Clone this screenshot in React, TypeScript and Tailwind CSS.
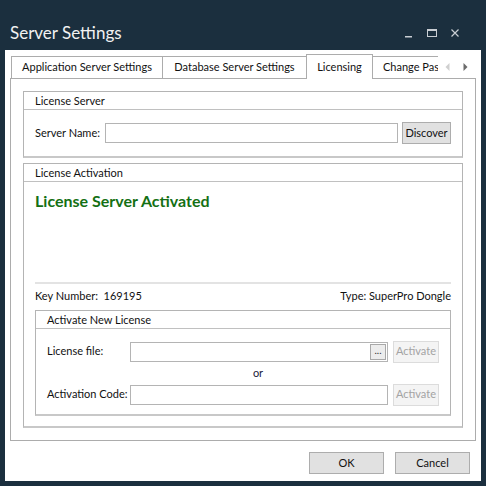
import React from "react";

const ui = { fontFamily: 'Lato, "Noto Sans", "Liberation Sans", sans-serif' };

function GroupBox({
  title,
  className,
  bodyClassName,
  children,
}: {
  title: string;
  className?: string;
  bodyClassName?: string;
  children: React.ReactNode;
}) {
  return (
    <div className={"flex flex-col border border-[#b4b4b4] border-b-2 border-b-[#c8c8c8] " + (className ?? "")}>
      <div className="h-[18px] shrink-0 flex items-center pl-[11px] pt-[2px] border-b border-[#c0c0c0] text-[11px] text-[#111] whitespace-nowrap">
        {title}
      </div>
      <div className={"flex-1 flex flex-col " + (bodyClassName ?? "")}>{children}</div>
    </div>
  );
}

function Tab({ label, selected, w }: { label: string; selected?: boolean; w: string }) {
  return (
    <div
      className={
        "shrink-0 flex items-center justify-center border border-b-0 border-[#acacac] bg-white text-[11px] text-[#111] whitespace-nowrap overflow-hidden " +
        w +
        (selected ? " h-[25px] -mb-px relative z-10" : " h-[22px] -ml-px first:ml-0")
      }
    >
      {label}
    </div>
  );
}

function WinButton({ label, disabled, w }: { label: string; disabled?: boolean; w: string }) {
  return (
    <div
      className={
        "h-[22px] flex items-center justify-center border text-[11px] whitespace-nowrap " +
        w +
        (disabled
          ? " border-[#dcdcdc] bg-[#f4f4f4] text-[#a3a3a3]"
          : " border-[#adadad] bg-[#e1e1e1] text-[#111]")
      }
    >
      {label}
    </div>
  );
}

export default function App() {
  return (
    <div className="w-[486px] h-[486px] bg-[#1b2f3e] flex flex-col" style={ui}>
      {/* title bar */}
      <div className="h-[50px] shrink-0 flex items-center pl-[10px] pr-[26px] pt-[15px]">
        <div className="text-[17px] text-[#f2f2f2] leading-none flex-1">Server Settings</div>
        <div className="flex items-center gap-[12px]">
          <svg width="10" height="10" viewBox="0 0 10 10">
            <rect x="1" y="8" width="7" height="1.5" fill="#c9ced3" />
          </svg>
          <svg width="12" height="10" viewBox="0 0 12 10">
            <rect x="1.5" y="1.5" width="9" height="7" fill="none" stroke="#c9ced3" strokeWidth="1" />
            <rect x="1" y="1" width="10" height="2" fill="#c9ced3" />
          </svg>
          <svg width="10" height="10" viewBox="0 0 10 10">
            <path d="M1.5 1.5 L8.5 8.5 M8.5 1.5 L1.5 8.5" stroke="#c9ced3" strokeWidth="1.2" />
          </svg>
        </div>
      </div>

      {/* client area */}
      <div className="mx-[5px] mb-[5px] flex-1 bg-white flex flex-col px-[5px] pt-[5px]">
        {/* tab strip */}
        <div className="h-[23px] shrink-0 flex items-end pl-[1px]">
          <Tab label="Application Server Settings" w="w-[152px]" />
          <Tab label="Database Server Settings" w="w-[145px]" />
          <Tab label="Licensing" selected w="w-[67px] -ml-px" />
          <div className="shrink-0 w-[66px] h-[22px] -ml-px flex items-center pl-[10px] border-t border-l border-[#acacac] text-[11px] text-[#111] whitespace-nowrap overflow-hidden">
            Change Password
          </div>
          <div className="flex-1 h-[22px] flex items-center justify-end gap-[13px] pr-[8px]">
            <svg width="5" height="8" viewBox="0 0 5 8">
              <path d="M4.5 0 L0.5 4 L4.5 8 Z" fill="#cfcfcf" />
            </svg>
            <svg width="5" height="8" viewBox="0 0 5 8">
              <path d="M0.5 0 L4.5 4 L0.5 8 Z" fill="#6b6b6b" />
            </svg>
          </div>
        </div>

        {/* tab page */}
        <div className="h-[363px] shrink-0 border border-[#acacac] flex flex-col px-[12px] pt-[12px] gap-[5px]">
          <GroupBox title="License Server" className="h-[67px]" bodyClassName="pt-[12px] px-[11px]">
            <div className="flex items-center">
              <div className="w-[70px] text-[11px] text-[#111] whitespace-nowrap">Server Name:</div>
              <div className="w-[293px] h-[20px] border border-[#b4b4b4] bg-white" />
              <div className="ml-[4px]">
                <WinButton label="Discover" w="w-[49px]" />
              </div>
            </div>
          </GroupBox>

          <GroupBox title="License Activation" className="h-[265px]" bodyClassName="px-[11px]">
            <div className="h-[100px] pt-[9px] text-[16px] font-bold text-[#147014] leading-[20px] whitespace-nowrap">
              License Server Activated
            </div>
            <div className="h-[2px] bg-[#e3e3e3]" />
            <div className="h-[24px] flex items-center justify-between text-[11px] text-[#111] whitespace-nowrap">
              <div>Key Number:&nbsp; 169195</div>
              <div>Type: SuperPro Dongle</div>
            </div>
            <GroupBox title="Activate New License" className="h-[106px] mt-[2px]" bodyClassName="px-[11px] pt-[12px]">
              <div className="flex items-center h-[21px]">
                <div className="w-[83px] text-[11px] text-[#111] whitespace-nowrap">License file:</div>
                <div className="w-[259px] h-[20px] border border-[#b4b4b4] bg-white flex justify-end items-center pr-[1px]">
                  <div className="w-[16px] h-[16px] border border-[#a8a8a8] bg-[#ececec] flex items-center justify-center text-[10px] leading-none text-[#333] pb-[3px]">
                    ...
                  </div>
                </div>
                <div className="ml-[5px]">
                  <WinButton label="Activate" disabled w="w-[46px]" />
                </div>
              </div>
              <div className="h-[22px] flex items-center justify-center pl-[30px] text-[11px] text-[#1a1a3a]">or</div>
              <div className="flex items-center h-[21px]">
                <div className="w-[83px] text-[11px] text-[#111] whitespace-nowrap">Activation Code:</div>
                <div className="w-[259px] h-[20px] border border-[#b4b4b4] bg-white" />
                <div className="ml-[5px]">
                  <WinButton label="Activate" disabled w="w-[46px]" />
                </div>
              </div>
            </GroupBox>
          </GroupBox>
        </div>

        {/* dialog buttons */}
        <div className="flex-1 flex items-start justify-end gap-[11px] pt-[11px] pr-[6px]">
          <WinButton label="OK" w="w-[75px]" />
          <WinButton label="Cancel" w="w-[75px]" />
        </div>
      </div>
    </div>
  );
}
